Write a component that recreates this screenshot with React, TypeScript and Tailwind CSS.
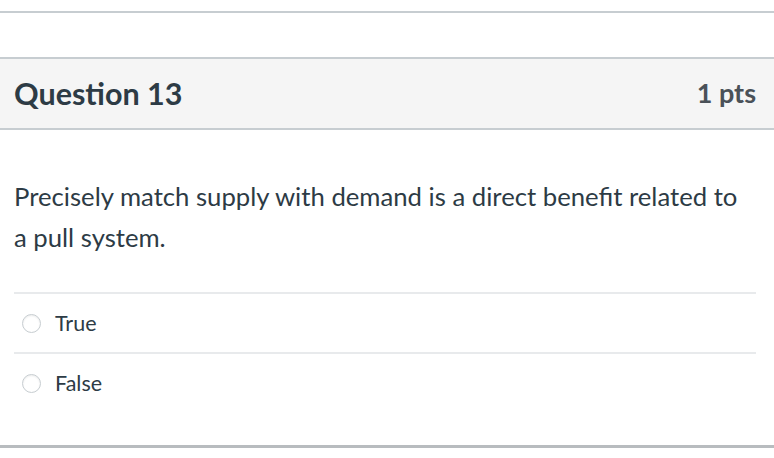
import React from 'react';

const answers = ['True', 'False'];

export default function App() {
  return (
    <div className="w-[774px] h-[458px] bg-white overflow-hidden text-[#2d3b45]" style={{ fontFamily: 'Lato, "Open Sans", sans-serif' }}>
      <div className="h-[11px]" />
      <div className="border-t-2 border-[#c7cdd1] h-[46px]" />
      {/* Question header */}
      <div className="h-[73px] bg-[#f5f5f5] border-y-2 border-[#c7cdd1] flex items-center justify-between pl-[14px] pr-[18px]">
        <h2 className="text-[30.5px] font-bold">Question 13</h2>
        <span className="text-[27px] font-bold text-[#4a5158]">1 pts</span>
      </div>
      {/* Question body */}
      <div className="pl-[14px] pr-[18px] pt-[46px]">
        <p className="text-[25.7px] leading-[41px] max-w-[735px]">
          Precisely match supply with demand is a direct benefit related to a pull system.
        </p>
        <div className="mt-[34px]">
          {answers.map(a => (
            <div key={a} className="border-t-2 border-[#e8eaec] h-[60px] flex items-center gap-[14px] pl-[8px]">
              <span className="w-[19px] h-[19px] rounded-full border border-[#c7cdd1] bg-white shadow-[inset_0_1px_2px_rgba(0,0,0,0.08)]" />
              <span className="text-[21.5px]">{a}</span>
            </div>
          ))}
        </div>
      </div>
      <div className="mt-[33px] border-t-[3px] border-[#b8bcbf]" />
    </div>
  );
}
